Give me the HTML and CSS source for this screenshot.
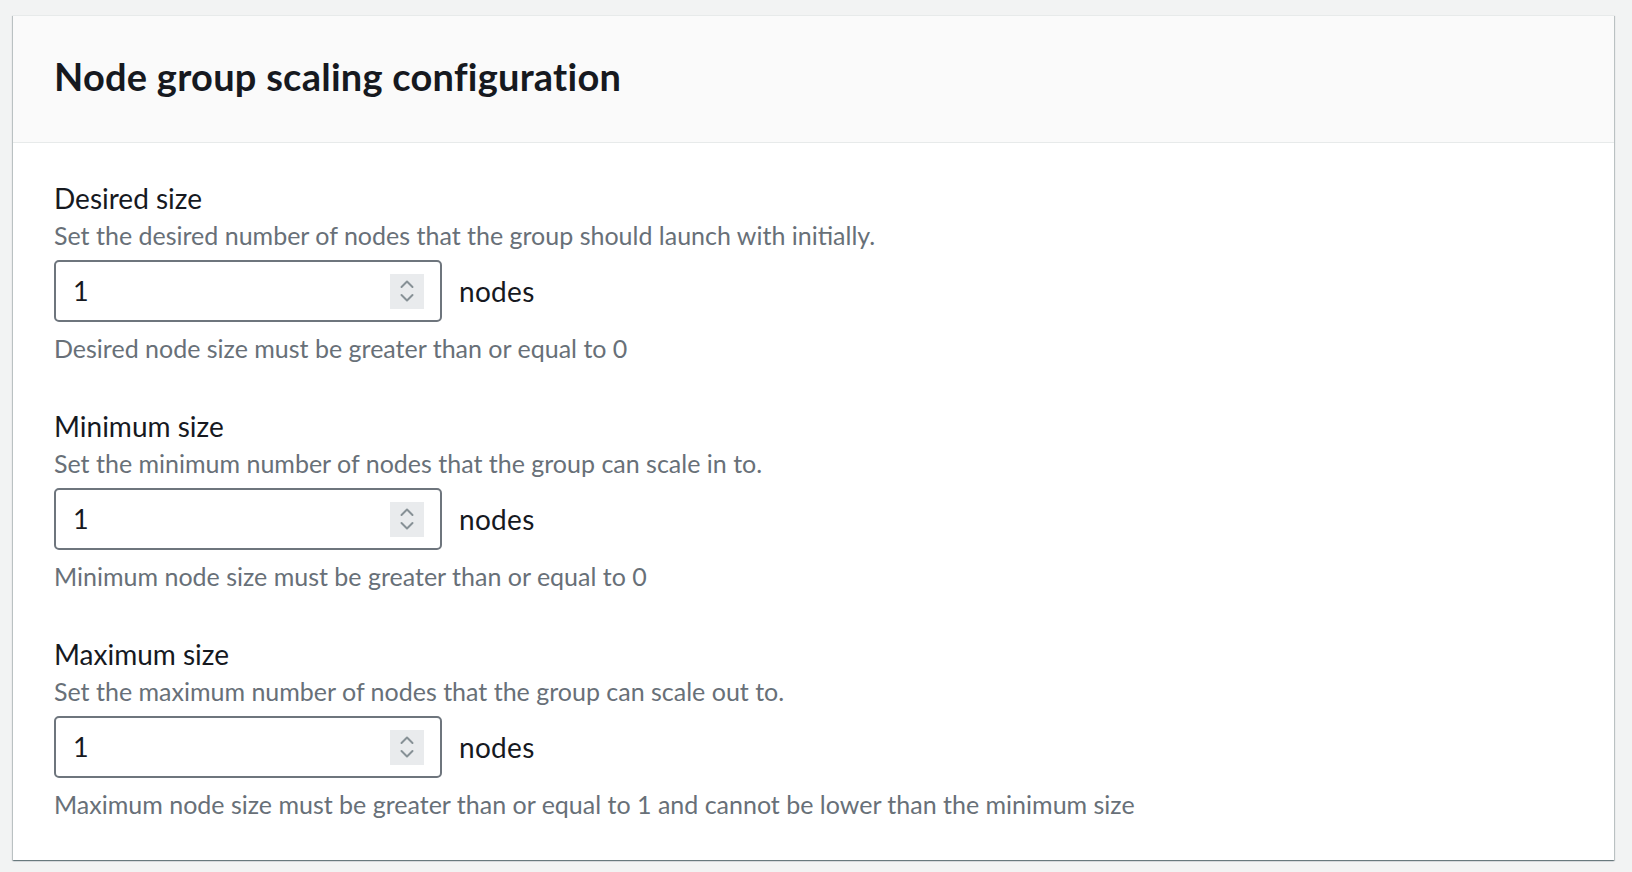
FILE: index.html
```html
<!DOCTYPE html>
<html lang="en">
<head>
<meta charset="utf-8">
<title>Node group scaling configuration</title>
<link rel="stylesheet" href="styles.css">
</head>
<body>
<div class="card">
  <div class="card-header">
    <h2 class="title">Node group scaling configuration</h2>
  </div>
  <div class="card-body">
    <div class="field">
      <div class="label">Desired size</div>
      <div class="desc">Set the desired number of nodes that the group should launch with initially.</div>
      <div class="control-row">
        <div class="input">
          <span class="value">1</span>
          <span class="spinner"><svg width="16" height="28" viewBox="0 0 16 28"><path d="M2.5 10 L8 4.5 L13.5 10" fill="none" stroke="#879196" stroke-width="2" stroke-linecap="round" stroke-linejoin="round"/><path d="M2.5 18 L8 23.5 L13.5 18" fill="none" stroke="#879196" stroke-width="2" stroke-linecap="round" stroke-linejoin="round"/></svg></span>
        </div>
        <span class="unit">nodes</span>
      </div>
      <div class="constraint">Desired node size must be greater than or equal to 0</div>
    </div>
    <div class="field">
      <div class="label">Minimum size</div>
      <div class="desc">Set the minimum number of nodes that the group can scale in to.</div>
      <div class="control-row">
        <div class="input">
          <span class="value">1</span>
          <span class="spinner"><svg width="16" height="28" viewBox="0 0 16 28"><path d="M2.5 10 L8 4.5 L13.5 10" fill="none" stroke="#879196" stroke-width="2" stroke-linecap="round" stroke-linejoin="round"/><path d="M2.5 18 L8 23.5 L13.5 18" fill="none" stroke="#879196" stroke-width="2" stroke-linecap="round" stroke-linejoin="round"/></svg></span>
        </div>
        <span class="unit">nodes</span>
      </div>
      <div class="constraint">Minimum node size must be greater than or equal to 0</div>
    </div>
    <div class="field">
      <div class="label">Maximum size</div>
      <div class="desc">Set the maximum number of nodes that the group can scale out to.</div>
      <div class="control-row">
        <div class="input">
          <span class="value">1</span>
          <span class="spinner"><svg width="16" height="28" viewBox="0 0 16 28"><path d="M2.5 10 L8 4.5 L13.5 10" fill="none" stroke="#879196" stroke-width="2" stroke-linecap="round" stroke-linejoin="round"/><path d="M2.5 18 L8 23.5 L13.5 18" fill="none" stroke="#879196" stroke-width="2" stroke-linecap="round" stroke-linejoin="round"/></svg></span>
        </div>
        <span class="unit">nodes</span>
      </div>
      <div class="constraint">Maximum node size must be greater than or equal to 1 and cannot be lower than the minimum size</div>
    </div>
  </div>
</div>
</body>
</html>
```

FILE: styles.css
```css
html, body {
  margin: 0;
  padding: 0;
}
body {
  background: #f2f3f3;
  font-family: Lato, "Open Sans", sans-serif;
  color: #16191f;
  padding: 15px 18px 0 13px;
  height: 872px;
  box-sizing: border-box;
}
.card {
  width: 1601px;
  background: #ffffff;
  border-top: 1px solid #e7eaea;
  box-shadow: 0 1px 1px 0 rgba(0, 28, 36, 0.35), 1px 1px 1px 0 rgba(0, 28, 36, 0.18), -1px 1px 1px 0 rgba(0, 28, 36, 0.18);
}
.card-header {
  background: #fafafa;
  height: 127px;
  border-bottom: 1px solid #e7eaea;
  display: flex;
  align-items: center;
  padding-left: 41px;
  box-sizing: border-box;
}
.title {
  margin: 0 0 6px 0;
  font-size: 38px;
  font-weight: 700;
  letter-spacing: 0.25px;
  line-height: 44px;
  color: #16191f;
}
.card-body {
  padding: 37px 41px 38px 41px;
  display: flex;
  flex-direction: column;
  gap: 42px;
}
.field {
  display: flex;
  flex-direction: column;
}
.label {
  font-size: 28px;
  line-height: 36px;
  color: #16191f;
}
.desc {
  margin-top: 1px;
  font-size: 25px;
  line-height: 36px;
  color: #687078;
}
.control-row {
  display: flex;
  align-items: center;
  margin-top: 7px;
}
.input {
  width: 388px;
  height: 62px;
  box-sizing: border-box;
  border: 2px solid #6e757d;
  border-radius: 5px;
  display: flex;
  align-items: center;
  justify-content: space-between;
  padding: 0 16px 0 17px;
}
.value {
  font-size: 27px;
  line-height: 36px;
  color: #16191f;
}
.spinner {
  width: 34px;
  height: 35px;
  background: #e9ebed;
  display: flex;
  align-items: center;
  justify-content: center;
}
.spinner svg {
  display: block;
}
.unit {
  margin-left: 17px;
  font-size: 28px;
  letter-spacing: 0.3px;
  line-height: 36px;
  color: #16191f;
}
.constraint {
  margin-top: 8px;
  font-size: 25px;
  line-height: 36px;
  color: #687078;
}
```
